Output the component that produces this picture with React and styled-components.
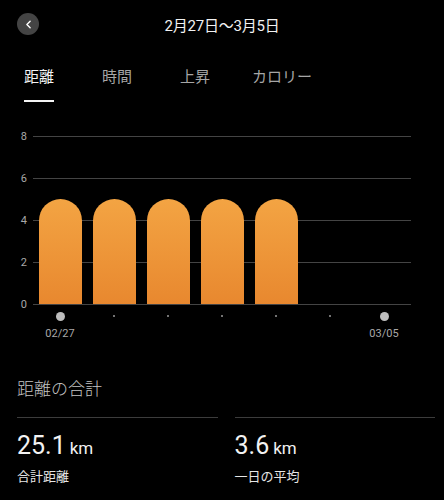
import styled, { createGlobalStyle } from "styled-components";
import { ChevronLeft } from "lucide-react";

const GlobalStyle = createGlobalStyle`
  body {
    margin: 0;
    background: #000;
    font-family: Roboto, "Noto Sans CJK JP", sans-serif;
    color: #eee;
  }
`;

const tabs = ["距離", "時間", "上昇", "カロリー"];
const values = [5.02, 5.02, 5.02, 5.02, 5.02, 0, 0];
const yTicks = [8, 6, 4, 2, 0];
const MAX = 8;
const PLOT_H = 168;

const App = () => {
  return (
    <Page>
      <GlobalStyle />
      <Header>
        <BackButton>
          <ChevronLeft size={13} strokeWidth={2.6} color="#fff" />
        </BackButton>
        <Title>2月27日〜3月5日</Title>
        <span />
      </Header>

      <Tabs>
        {tabs.map((t, i) => (
          <Tab key={t} $active={i === 0}>
            {t}
            <Underline $active={i === 0} />
          </Tab>
        ))}
      </Tabs>

      <Chart>
        <YAxis>
          {yTicks.map((v) => (
            <YLabel key={v}>{v}</YLabel>
          ))}
        </YAxis>
        <Plot>
          {values.map((v, i) => (
            <Slot key={i}>
              {v > 0 && <Bar style={{ height: (v / MAX) * PLOT_H }} />}
            </Slot>
          ))}
        </Plot>
      </Chart>

      <XAxis>
        {values.map((_, i) => {
          const edge = i === 0 || i === values.length - 1;
          return (
            <XSlot key={i}>
              <DotBox>
                <Dot $big={edge} />
              </DotBox>
              <XLabel>{i === 0 ? "02/27" : i === values.length - 1 ? "03/05" : ""}</XLabel>
            </XSlot>
          );
        })}
      </XAxis>

      <Summary>
        <SummaryTitle>距離の合計</SummaryTitle>
        <Stats>
          <Stat>
            <Value>
              25.1<Unit>km</Unit>
            </Value>
            <StatLabel>合計距離</StatLabel>
          </Stat>
          <Stat>
            <Value>
              3.6<Unit>km</Unit>
            </Value>
            <StatLabel>一日の平均</StatLabel>
          </Stat>
        </Stats>
      </Summary>
    </Page>
  );
};

export default App;

const Page = styled.div`
  width: 444px;
  height: 500px;
  background: #000;
  overflow: hidden;
`;

const Header = styled.div`
  height: 48px;
  display: grid;
  grid-template-columns: 56px 1fr 56px;
  align-items: center;
`;

const BackButton = styled.div`
  width: 22px;
  height: 22px;
  margin-left: 17px;
  border-radius: 50%;
  background: #444;
  display: flex;
  align-items: center;
  justify-content: center;
`;

const Title = styled.div`
  text-align: center;
  font-size: 15px;
  color: #f2f2f2;
  letter-spacing: -0.2px;
`;

const Tabs = styled.div`
  display: flex;
  gap: 48px;
  padding: 18px 0 0 24px;
`;

const Tab = styled.div`
  display: flex;
  flex-direction: column;
  font-size: 15px;
  line-height: 22px;
  color: ${(p) => (p.$active ? "#f4f4f4" : "#a6a6a6")};
  &:last-child {
    margin-left: -6px;
  }
`;

const Underline = styled.div`
  height: 2px;
  margin-top: 12px;
  background: ${(p) => (p.$active ? "#f4f4f4" : "transparent")};
`;

const Chart = styled.div`
  display: flex;
  margin-top: 34px;
`;

const YAxis = styled.div`
  width: 27px;
  padding-right: 6px;
  height: 169px;
  display: flex;
  flex-direction: column;
  justify-content: space-between;
  align-items: flex-end;
`;

const YLabel = styled.div`
  height: 1px;
  display: flex;
  align-items: center;
  font-size: 11px;
  color: #a8a8a8;
`;

const Plot = styled.div`
  width: 378px;
  height: 169px;
  display: flex;
  align-items: flex-end;
  background-image: linear-gradient(#444 1px, transparent 1px);
  background-size: 100% 42px;
`;

const Slot = styled.div`
  width: 54px;
  height: 168px;
  display: flex;
  align-items: flex-end;
  justify-content: center;
  margin-bottom: 1px;
`;

const Bar = styled.div`
  width: 43px;
  border-radius: 21.5px 21.5px 0 0;
  background: linear-gradient(#f3a443, #e8882f);
`;

const XAxis = styled.div`
  display: flex;
  margin-left: 33px;
`;

const XSlot = styled.div`
  width: 54px;
  display: flex;
  flex-direction: column;
  align-items: center;
`;

const DotBox = styled.div`
  height: 22px;
  display: flex;
  align-items: center;
`;

const Dot = styled.div`
  width: ${(p) => (p.$big ? "9px" : "2px")};
  height: ${(p) => (p.$big ? "9px" : "2px")};
  border-radius: 50%;
  background: ${(p) => (p.$big ? "#bdbdbd" : "#9a9a9a")};
`;

const XLabel = styled.div`
  height: 14px;
  font-size: 11px;
  line-height: 14px;
  color: #a8a8a8;
`;

const Summary = styled.div`
  padding: 36px 9px 0 17px;
`;

const SummaryTitle = styled.div`
  font-size: 17px;
  line-height: 24px;
  font-weight: 300;
  color: #c4c4c4;
`;

const Stats = styled.div`
  display: grid;
  grid-template-columns: 1fr 1fr;
  gap: 17px;
  margin-top: 16px;
`;

const Stat = styled.div`
  border-top: 1px solid #3c3c3c;
  padding-top: 13px;
`;

const Value = styled.div`
  font-size: 25px;
  line-height: 30px;
  color: #f2f2f2;
`;

const Unit = styled.span`
  font-size: 17px;
  margin-left: 4px;
`;

const StatLabel = styled.div`
  margin-top: 5px;
  font-size: 13px;
  line-height: 18px;
  color: #e6e6e6;
`;
